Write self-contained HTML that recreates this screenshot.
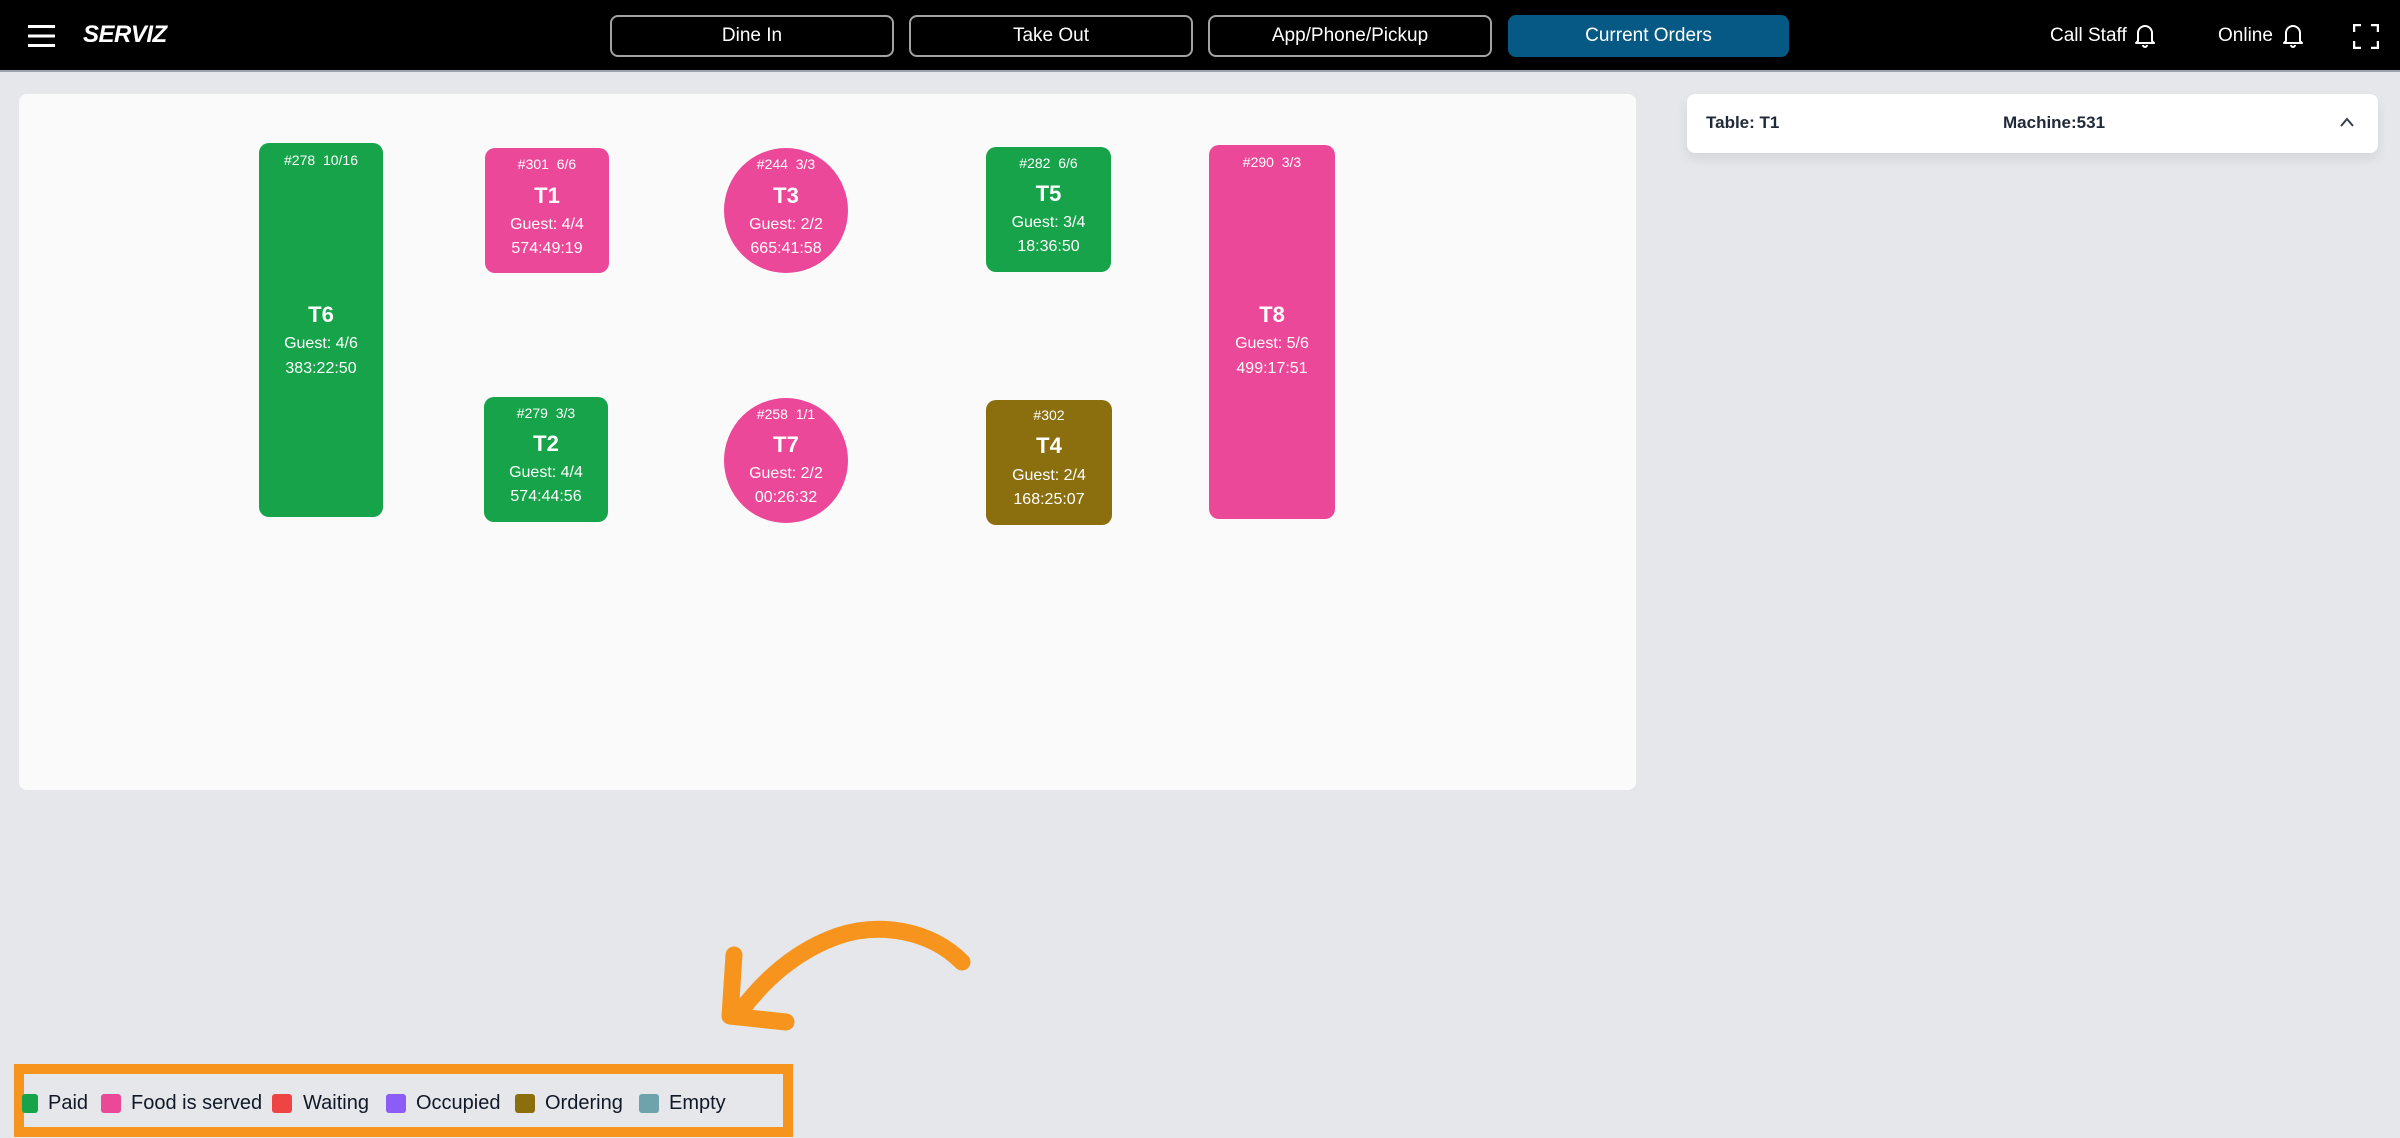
<!DOCTYPE html>
<html><head><meta charset="utf-8"><style>
*{margin:0;padding:0;box-sizing:border-box}
body{width:2400px;height:1138px;background:#e5e7eb;font-family:"Liberation Sans",sans-serif;position:relative;overflow:hidden}
.hdr{position:absolute;left:0;top:0;width:2400px;height:72px;background:#000;border-bottom:2px solid #9ca3af}
.btn{position:absolute;top:15px;height:42px;border:2px solid #a3a3a3;border-radius:8px;color:#fff;font-size:19px;display:flex;align-items:center;justify-content:center}
.abs{position:absolute}
.panel{position:absolute;left:19px;top:94px;width:1617px;height:696px;background:#fafafa;border-radius:8px}
.t{position:absolute;border-radius:10px;color:#fff;text-align:center}
.t div{position:absolute;left:0;right:0;line-height:24px}
.h{font-size:14px}
.n{font-size:22px;font-weight:bold}
.g{font-size:16px}
.g2{font-size:16px}
.gr{background:#16a34a}.pk{background:#ec4899}.ol{background:#8b6f0f}
.leg{position:absolute;top:1094px;height:19px;width:20px;border-radius:3px}
.lt{position:absolute;top:1091px;font-size:20px;color:#111827;line-height:24px}
</style></head><body>
<div class="hdr">
  <svg class="abs" style="left:28px;top:24px" width="27" height="24" viewBox="0 0 27 24"><rect y="1" width="27" height="3" fill="#fff"/><rect y="10.5" width="27" height="3" fill="#fff"/><rect y="20" width="27" height="3" fill="#fff"/></svg>
  <div class="abs" style="left:83px;top:21px;color:#fff;font-size:24px;font-weight:bold;font-style:italic;letter-spacing:-0.5px">SERVIZ</div>
  <div class="btn" style="left:610px;width:284px">Dine In</div>
  <div class="btn" style="left:909px;width:284px">Take Out</div>
  <div class="btn" style="left:1208px;width:284px">App/Phone/Pickup</div>
  <div class="btn" style="left:1508px;width:281px;background:#075985;border-color:#075985">Current Orders</div>
  <div class="abs" style="left:2050px;top:25px;color:#fff;font-size:19px">Call Staff</div>
  <svg class="abs" style="left:2134px;top:23px" width="22" height="26" viewBox="0 0 22 26" fill="none" stroke="#fff" stroke-width="2" stroke-linejoin="round"><path d="M4 18V10a7 7 0 0 1 14 0v8l2 2H2z"/><path d="M9 22a2 2 0 0 0 4 0"/></svg>
  <div class="abs" style="left:2218px;top:25px;color:#fff;font-size:19px">Online</div>
  <svg class="abs" style="left:2282px;top:23px" width="22" height="26" viewBox="0 0 22 26" fill="none" stroke="#fff" stroke-width="2" stroke-linejoin="round"><path d="M4 18V10a7 7 0 0 1 14 0v8l2 2H2z"/><path d="M9 22a2 2 0 0 0 4 0"/></svg>
  <svg class="abs" style="left:2353px;top:24px" width="26" height="25" viewBox="0 0 26 25" fill="none" stroke="#fff" stroke-width="2.5"><path d="M1 8V1h7M18 1h7v7M25 17v7h-7M8 24H1v-7"/></svg>
</div>

<div class="panel"></div>

<div class="t gr" style="left:259px;top:143px;width:124px;height:374px"><div class="h" style="top:5px">#278&nbsp;&nbsp;10/16</div><div class="n" style="top:160px">T6</div><div class="g" style="top:189px">Guest: 4/6</div><div class="g2" style="top:214px">383:22:50</div></div>
<div class="t pk" style="left:485px;top:148px;width:124px;height:125px"><div class="h" style="top:4px">#301&nbsp;&nbsp;6/6</div><div class="n" style="top:36px">T1</div><div class="g" style="top:65px">Guest: 4/4</div><div class="g2" style="top:89px">574:49:19</div></div>
<div class="t pk" style="left:724px;top:148px;width:124px;height:125px;border-radius:50%"><div class="h" style="top:4px">#244&nbsp;&nbsp;3/3</div><div class="n" style="top:36px">T3</div><div class="g" style="top:65px">Guest: 2/2</div><div class="g2" style="top:89px">665:41:58</div></div>
<div class="t gr" style="left:986px;top:147px;width:125px;height:125px"><div class="h" style="top:4px">#282&nbsp;&nbsp;6/6</div><div class="n" style="top:35px">T5</div><div class="g" style="top:64px">Guest: 3/4</div><div class="g2" style="top:88px">18:36:50</div></div>
<div class="t pk" style="left:1209px;top:145px;width:126px;height:374px"><div class="h" style="top:5px">#290&nbsp;&nbsp;3/3</div><div class="n" style="top:158px">T8</div><div class="g" style="top:187px">Guest: 5/6</div><div class="g2" style="top:212px">499:17:51</div></div>
<div class="t gr" style="left:484px;top:397px;width:124px;height:125px"><div class="h" style="top:4px">#279&nbsp;&nbsp;3/3</div><div class="n" style="top:35px">T2</div><div class="g" style="top:64px">Guest: 4/4</div><div class="g2" style="top:88px">574:44:56</div></div>
<div class="t pk" style="left:724px;top:398px;width:124px;height:125px;border-radius:50%"><div class="h" style="top:4px">#258&nbsp;&nbsp;1/1</div><div class="n" style="top:35px">T7</div><div class="g" style="top:64px">Guest: 2/2</div><div class="g2" style="top:88px">00:26:32</div></div>
<div class="t ol" style="left:986px;top:400px;width:126px;height:125px"><div class="h" style="top:3px">#302</div><div class="n" style="top:34px">T4</div><div class="g" style="top:64px">Guest: 2/4</div><div class="g2" style="top:88px">168:25:07</div></div>

<div class="abs" style="left:1687px;top:94px;width:691px;height:59px;background:#fff;border-radius:8px;box-shadow:0 6px 12px rgba(0,0,0,0.08)">
  <div class="abs" style="left:19px;top:19px;font-size:17px;font-weight:bold;color:#1f2937">Table: T1</div>
  <div class="abs" style="left:316px;top:19px;font-size:17px;font-weight:bold;color:#1f2937">Machine:531</div>
  <svg class="abs" style="left:652px;top:22px" width="16" height="12" viewBox="0 0 16 12" fill="none" stroke="#374151" stroke-width="2"><path d="M2 10L8 3l6 7"/></svg>
</div>

<svg class="abs" style="left:0;top:0" width="2400" height="1138" viewBox="0 0 2400 1138" fill="none" stroke="#f7941d" stroke-width="17" stroke-linecap="round" stroke-linejoin="round">
  <path d="M962 962C930 930 880 922 838 936C798 950 765 978 740 1012"/>
  <path d="M734 955L730 1016L786 1022"/>
</svg>
<div class="abs" style="left:14px;top:1064px;width:779px;height:73px;border:10px solid #f7941d"></div>
<div class="leg" style="left:22px;width:16px;background:#16a34a"></div><div class="lt" style="left:48px">Paid</div>
<div class="leg" style="left:101px;background:#ec4899"></div><div class="lt" style="left:131px">Food is served</div>
<div class="leg" style="left:272px;background:#ef4444"></div><div class="lt" style="left:303px">Waiting</div>
<div class="leg" style="left:386px;background:#8b5cf6"></div><div class="lt" style="left:416px">Occupied</div>
<div class="leg" style="left:515px;background:#8b6f0f"></div><div class="lt" style="left:545px">Ordering</div>
<div class="leg" style="left:639px;background:#6fa3ab"></div><div class="lt" style="left:669px">Empty</div>
</body></html>
